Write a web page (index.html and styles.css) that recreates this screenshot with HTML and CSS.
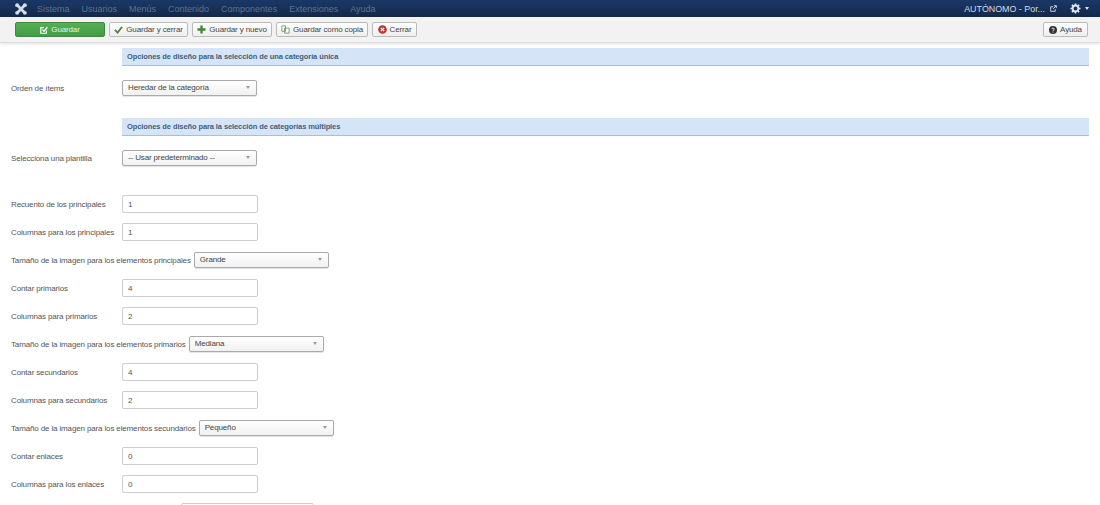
FILE: index.html
```html
<!DOCTYPE html>
<html lang="es">
<head>
    <meta charset="UTF-8">
    <title>Opciones de diseño</title>
    <link rel="stylesheet" href="styles.css">
</head>
<body>
    <nav class="navbar">
        <svg class="logo" viewBox="0 0 14 14" width="12" height="12"><path d="M3 3l8 8M11 3l-8 8" stroke="#d5dce6" stroke-width="3.200" fill="none"/><circle cx="2.500" cy="2.500" r="2.300" fill="#d5dce6"/><circle cx="11.500" cy="2.500" r="2.300" fill="#d5dce6"/><circle cx="2.500" cy="11.500" r="2.300" fill="#d5dce6"/><circle cx="11.500" cy="11.500" r="2.300" fill="#d5dce6"/></svg>
        <ul class="menu">
            <li>Sistema</li>
            <li>Usuarios</li>
            <li>Menús</li>
            <li>Contenido</li>
            <li>Componentes</li>
            <li>Extensiones</li>
            <li>Ayuda</li>
        </ul>
        <div class="nav-right">
            <span>AUTÓNOMO - Por...</span>
            <svg class="ext" viewBox="0 0 10 10" width="7" height="7"><path d="M7.500 6v3H1V2.500h3.500M5.500 1H9v3.500M9 1L4.500 5.500" stroke="#d5dce6" stroke-width="1.300" fill="none"/></svg>
            <svg class="gear" viewBox="0 0 12 12" width="11" height="11"><circle cx="6" cy="6" r="3.200" fill="none" stroke="#dfe5ee" stroke-width="2.200"/><path d="M6 .5v2M6 9.500v2M.5 6h2M9.500 6h2M2.100 2.100l1.400 1.400M8.500 8.500l1.400 1.400M2.100 9.900l1.400-1.400M8.500 3.500l1.400-1.400" stroke="#dfe5ee" stroke-width="1.800"/></svg>
            <span class="caret"></span>
        </div>
    </nav>

    <div class="toolbar">
        <button class="btn btn-save">
            <svg viewBox="0 0 10 10" width="8" height="8"><path d="M8 5.500V9H1V2h4" stroke="#fff" stroke-width="1.400" fill="none"/><path d="M3 4.500l2 2L9.300 1.500" stroke="#fff" stroke-width="1.600" fill="none"/></svg>
            Guardar
        </button>
        <button class="btn btn-close-save">
            <svg viewBox="0 0 10 10" width="9" height="9"><path d="M1 5.500l3 3L9 2" stroke="#51833d" stroke-width="2" fill="none"/></svg>
            Guardar y cerrar
        </button>
        <button class="btn btn-new">
            <svg viewBox="0 0 10 10" width="9" height="9"><path d="M5 .5v9M.5 5h9" stroke="#3f8a35" stroke-width="2.600"/></svg>
            Guardar y nuevo
        </button>
        <button class="btn btn-copy">
            <svg viewBox="0 0 10 10" width="9" height="9"><path d="M1 1h4v6H1zM4 3.500h5V9H4z" stroke="#6f9a60" stroke-width="1" fill="#fff"/></svg>
            Guardar como copia
        </button>
        <button class="btn btn-close">
            <svg viewBox="0 0 10 10" width="9" height="9"><circle cx="5" cy="5" r="4.800" fill="#bd362f"/><path d="M3.200 3.200l3.600 3.600M6.800 3.200L3.200 6.800" stroke="#fff" stroke-width="1.500"/></svg>
            Cerrar
        </button>
        <button class="btn btn-help">
            <svg viewBox="0 0 10 10" width="8" height="8"><circle cx="5" cy="5" r="5" fill="#333"/><path d="M3.500 3.800C3.600 2.100 6.600 2.200 6.600 3.800 6.600 5 5 4.800 5 6.200M5 7v1.200" stroke="#fff" stroke-width="1.100" fill="none"/></svg>
            Ayuda
        </button>
    </div>

    <main class="content">
        <h4 class="section-title">Opciones de diseño para la selección de una categoría única</h4>
        <div class="row row-select-first">
            <label>Orden de ítems</label>
            <div class="select">Heredar de la categoría</div>
        </div>

        <h4 class="section-title second">Opciones de diseño para la selección de categorías múltiples</h4>
        <div class="row row-select-first">
            <label>Selecciona una plantilla</label>
            <div class="select">-- Usar predeterminado --</div>
        </div>

        <div class="fields">
            <div class="row">
                <label>Recuento de los principales</label>
                <input class="input" value="1">
            </div>
            <div class="row">
                <label>Columnas para los principales</label>
                <input class="input" value="1">
            </div>
            <div class="row">
                <label class="auto">Tamaño de la imagen para los elementos principales</label>
                <div class="select">Grande</div>
            </div>
            <div class="row">
                <label>Contar primarios</label>
                <input class="input" value="4">
            </div>
            <div class="row">
                <label>Columnas para primarios</label>
                <input class="input" value="2">
            </div>
            <div class="row">
                <label class="auto">Tamaño de la imagen para los elementos primarios</label>
                <div class="select">Mediana</div>
            </div>
            <div class="row">
                <label>Contar secundarios</label>
                <input class="input" value="4">
            </div>
            <div class="row">
                <label>Columnas para secundarios</label>
                <input class="input" value="2">
            </div>
            <div class="row">
                <label class="auto">Tamaño de la imagen para los elementos secundarios</label>
                <div class="select">Pequeño</div>
            </div>
            <div class="row">
                <label>Contar enlaces</label>
                <input class="input" value="0">
            </div>
            <div class="row">
                <label>Columnas para los enlaces</label>
                <input class="input" value="0">
            </div>
            <div class="row">
                <label class="spacer"></label>
                <input class="input last">
            </div>
        </div>
    </main>
</body>
</html>
```

FILE: styles.css
```css
* {
    box-sizing: border-box;
    margin: 0;
    padding: 0;
}

html, body {
    height: 505px;
    overflow: hidden;
}

body {
    background-color: #fff;
    color: #555;
    font-family: 'Liberation Sans', Arial, sans-serif;
    font-size: 8px;
    letter-spacing: -0.14px;
}

.navbar {
    display: flex;
    align-items: center;
    height: 17px;
    padding: 0 11px 0 15px;
    background: linear-gradient(#1a3867, #13294a);
    letter-spacing: 0;
}

.logo {
    margin-right: 10px;
}

.menu {
    display: flex;
    gap: 12px;
    list-style: none;
    font-size: 9px;
    color: #5d7391;
}

.nav-right {
    display: flex;
    align-items: center;
    margin-left: auto;
    color: #d5dce6;
    font-size: 8.900px;
}

.ext {
    margin-left: 5px;
}

.gear {
    margin-left: 13px;
}

.caret {
    margin-left: 4px;
    border-top: 3px solid #dfe5ee;
    border-left: 2.500px solid transparent;
    border-right: 2.500px solid transparent;
}

.toolbar {
    display: flex;
    gap: 4px;
    height: 26px;
    padding: 5px 12px 0 15px;
    background-color: #f2f2f2;
    border-bottom: 1px solid #ddd;
    box-shadow: 0 1px 3px rgba(0, 0, 0, 0.12);
}

.btn {
    display: flex;
    align-items: center;
    justify-content: center;
    gap: 3px;
    height: 15px;
    border: 1px solid #bbb;
    border-radius: 2px;
    background: linear-gradient(#fff, #eee);
    color: #444;
    font-family: inherit;
    font-size: 8px;
    letter-spacing: inherit;
}

.btn-save {
    width: 90px;
    background: linear-gradient(#55b054, #449c45);
    border-color: #3c8a3d;
    color: #e4f2e2;
}

.btn-close-save {
    width: 79px;
}

.btn-new {
    width: 80px;
}

.btn-copy {
    width: 92px;
}

.btn-close {
    width: 45px;
}

.btn-help {
    width: 45px;
    margin-left: auto;
}

.content {
    padding: 5px 11px 0 11px;
}

.section-title {
    height: 18px;
    margin-left: 111px;
    padding-left: 5px;
    background-color: #d5e5f7;
    border-bottom: 1px solid #a9bfd6;
    color: #3f5d7c;
    font-size: 7.500px;
    letter-spacing: -0.1px;
    line-height: 17px;
}

.second {
    margin-top: 22px;
}

.row {
    display: flex;
    align-items: center;
    height: 28px;
}

.row-select-first {
    height: 16px;
    margin-top: 14px;
}

.fields {
    margin-top: 24px;
}

label {
    width: 111px;
    flex-shrink: 0;
}

label.auto {
    width: auto;
    margin-right: 3px;
}

.select {
    position: relative;
    width: 135px;
    height: 16px;
    padding-left: 5px;
    border: 1px solid #aaa;
    border-radius: 2px;
    background: linear-gradient(#fff, #f1f1f1);
    box-shadow: 0 1px 1px rgba(0, 0, 0, 0.12);
    color: #444;
    line-height: 14px;
}

.select::after {
    content: "";
    position: absolute;
    top: 5px;
    right: 6px;
    border-top: 3px solid #999;
    border-left: 2px solid transparent;
    border-right: 2px solid transparent;
}

.input {
    width: 136px;
    height: 18px;
    padding-left: 5px;
    border: 1px solid #ccc;
    border-radius: 2px;
    color: #555;
    font-family: inherit;
    font-size: 8px;
}

.input.last {
    margin-left: 59px;
    width: 133px;
}
```
